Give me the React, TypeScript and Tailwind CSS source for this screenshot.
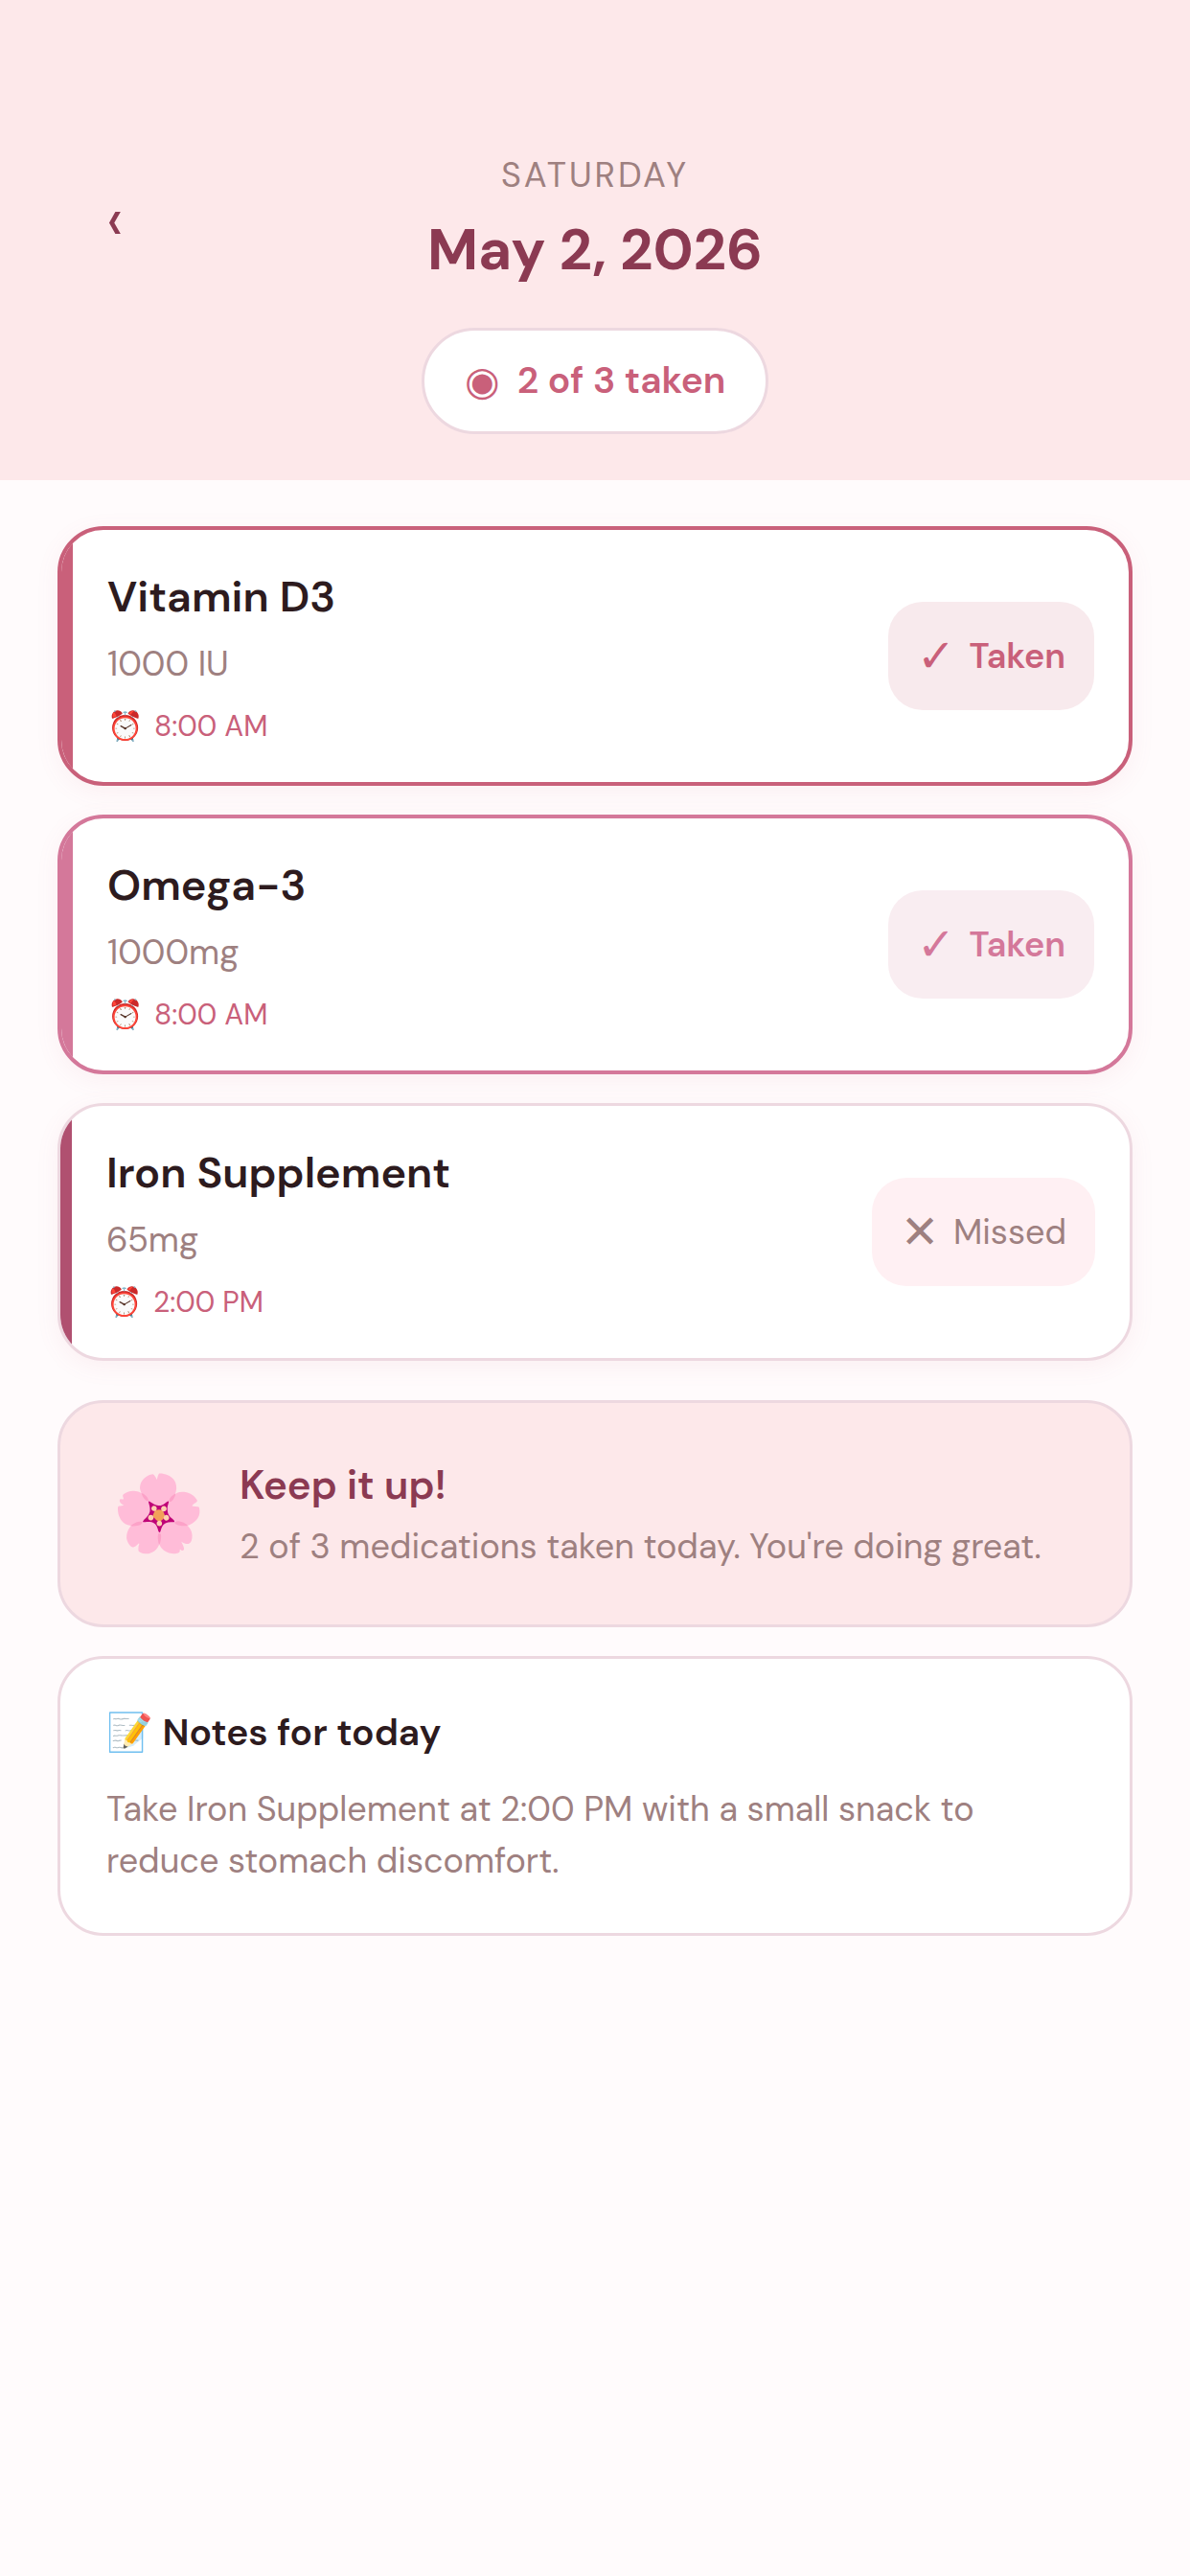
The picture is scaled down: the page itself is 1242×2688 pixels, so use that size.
type Medication = {
  name: string;
  dose: string;
  time: string;
  taken: boolean;
  card: string;
  bar: string;
  badge: string;
};

const medications: Medication[] = [
  {
    name: "Vitamin D3",
    dose: "1000 IU",
    time: "8:00 AM",
    taken: true,
    card: "border-4 border-[#c9607a]",
    bar: "bg-[#c9607a]",
    badge: "bg-[#f8eaed] font-semibold text-[#c9607a]",
  },
  {
    name: "Omega-3",
    dose: "1000mg",
    time: "8:00 AM",
    taken: true,
    card: "border-4 border-[#d4789a]",
    bar: "bg-[#d4789a]",
    badge: "bg-[#f9edf1] font-semibold text-[#d4789a]",
  },
  {
    name: "Iron Supplement",
    dose: "65mg",
    time: "2:00 PM",
    taken: false,
    card: "border-3 border-[#edd8e0]",
    bar: "bg-[#b05070]",
    badge: "bg-[#fff0f3] text-[#9e8080]",
  },
];

function MedicationCard({ med }: { med: Medication }) {
  return (
    <li
      className={`relative flex items-center justify-between overflow-hidden rounded-[48px] bg-white py-[38px] pr-9 pl-12 shadow-[0_6px_24px_rgba(201,96,122,0.08)] ${med.card}`}
    >
      {/* Colour bar */}
      <div className={`absolute inset-y-0 left-0 w-3 ${med.bar}`} />

      <div className="pt-0.5">
        <h2 className="text-[45px] leading-[60px] font-semibold text-[#2d1b1e]">{med.name}</h2>
        <p className="mt-4 text-4xl leading-[48px] text-[#9e8080]">{med.dose}</p>
        <p className="mt-[21px] flex h-10 items-center gap-3 text-3xl leading-10 text-[#c9607a]">
          <span>⏰</span>
          <span>{med.time}</span>
        </p>
      </div>

      <button
        type="button"
        className={`flex h-[113px] items-center gap-[15px] rounded-[36px] px-[30px] text-4xl leading-[48px] ${med.badge}`}
      >
        <span className="text-5xl font-normal">{med.taken ? "✓" : "✕"}</span>
        {med.taken ? "Taken" : "Missed"}
      </button>
    </li>
  );
}

export default function App() {
  return (
    <div className="min-h-screen bg-[#fffbfc] font-['DM_Sans','Open_Sans',sans-serif]">
      {/* Header */}
      <header className="bg-[#fde8ea] px-[60px] pt-[159px] pb-12">
        <div className="flex items-center justify-between">
          <button
            type="button"
            aria-label="Previous day"
            className="h-[120px] w-[120px] text-[66px] leading-[80px] text-[#8b3a52]"
          >
            ‹
          </button>
          <div className="text-center">
            <p className="text-4xl leading-[48px] tracking-[3px] text-[#9e8080]">SATURDAY</p>
            <h1 className="mt-[14px] text-6xl leading-[80px] font-bold text-[#8b3a52]">May 2, 2026</h1>
          </div>
          <div className="w-[120px]" />
        </div>

        <div className="mt-[41px] flex justify-center">
          <div className="flex h-[111px] items-center gap-[18px] rounded-full border-3 border-[#edd8e0] bg-white px-[42px] text-[39px] font-semibold text-[#c9607a]">
            <span className="text-[42px] font-normal">◉</span>
            <span>2 of 3 taken</span>
          </div>
        </div>
      </header>

      <main className="px-[60px] pt-12 pb-12">
        <ul className="flex flex-col gap-[30px]">
          {medications.map((med) => (
            <MedicationCard key={med.name} med={med} />
          ))}
        </ul>

        {/* Encouragement */}
        <section className="mt-[41px] flex items-center gap-9 rounded-[48px] border-3 border-[#edd8e0] bg-[#fde8ea] py-12 pr-12 pl-[54px]">
          <span className="text-[78px] leading-[135px]">🌸</span>
          <div>
            <h2 className="text-[42px] leading-[56px] font-semibold text-[#8b3a52]">Keep it up!</h2>
            <p className="mt-3 text-4xl leading-[48px] text-[#9e8080]">
              2 of 3 medications taken today. You're doing great.
            </p>
          </div>
        </section>

        {/* Notes */}
        <section className="mt-[30px] rounded-[48px] border-3 border-[#edd8e0] bg-white p-12">
          <h2 className="text-[39px] leading-[58px] font-semibold text-[#2d1b1e]">📝 Notes for today</h2>
          <p className="mt-6 text-4xl leading-[54px] text-[#9e8080]">
            Take Iron Supplement at 2:00 PM with a small snack to reduce stomach discomfort.
          </p>
        </section>
      </main>
    </div>
  );
}
